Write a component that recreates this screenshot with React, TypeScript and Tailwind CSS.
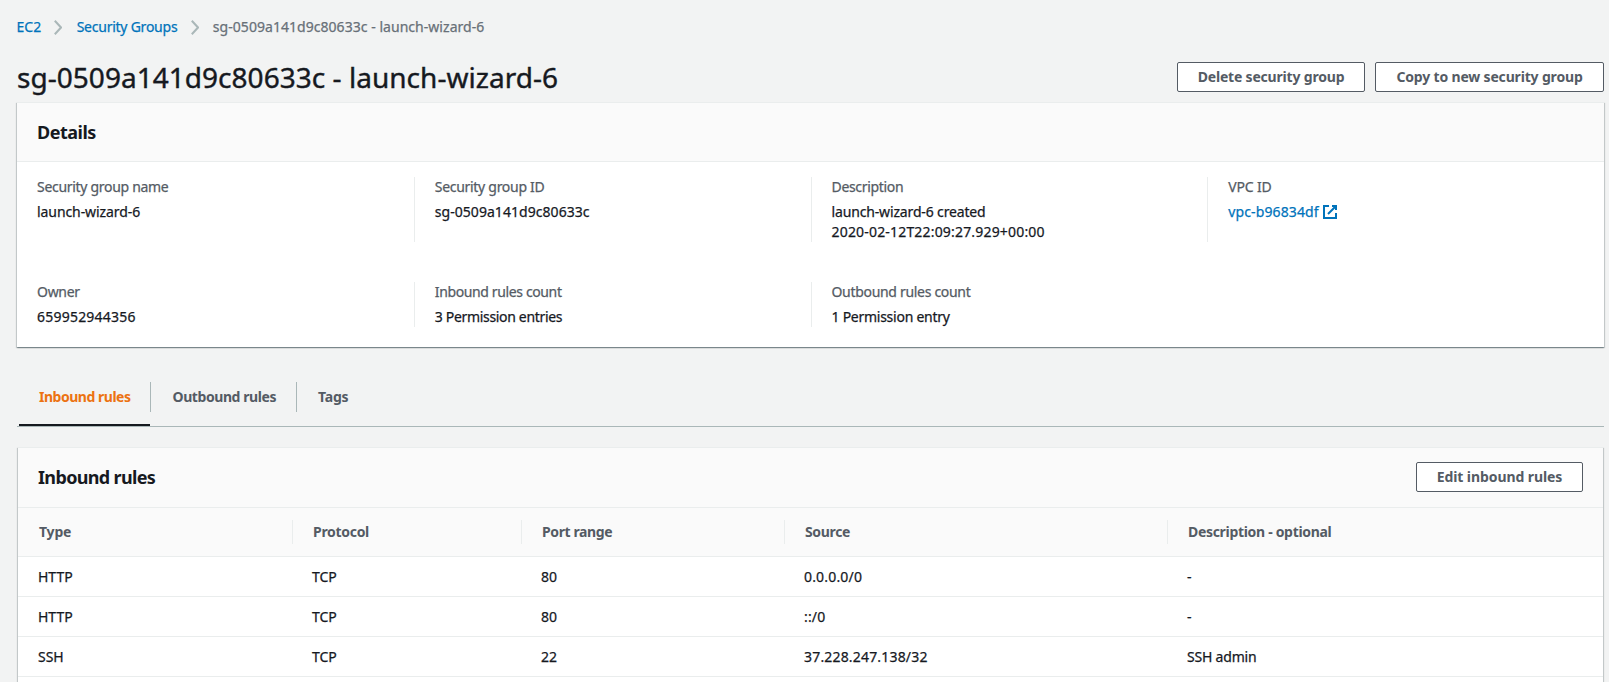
import type { ReactNode } from 'react';

const panelShadow =
  'shadow-[0_1px_1px_0_rgba(0,28,36,0.3),1px_1px_1px_0_rgba(0,28,36,0.15),-1px_1px_1px_0_rgba(0,28,36,0.15)]';

const bold = 'font-bold [-webkit-text-stroke:0]';

function Chevron() {
  return (
    <svg width="8" height="15" viewBox="0 0 8 15" fill="none" stroke="#aab7b8" strokeWidth="2">
      <path d="M0.8 0.8 L7 7.5 L0.8 14.2" />
    </svg>
  );
}

function ExternalIcon() {
  return (
    <svg width="16" height="16" viewBox="0 0 16 16" fill="none" stroke="#0073bb" strokeWidth="2">
      <path d="M10 2h4v4M6 10l8-8" />
      <path d="M14 9.048V14H2V2h5.036" />
    </svg>
  );
}

function Button({ className, children }: { className: string; children: ReactNode }) {
  return (
    <button
      className={`flex h-[30px] items-center justify-center rounded-xs border border-[#545b64] bg-white text-sm leading-5 whitespace-nowrap text-[#545b64] ${bold} ${className}`}
    >
      {children}
    </button>
  );
}

function Field({ label, labelClass, divider, children }: {
  label: string;
  labelClass: string;
  divider?: boolean;
  children: ReactNode;
}) {
  return (
    <div className={divider ? 'border-l border-[#eaeded] pl-5' : 'pl-5'}>
      <div className={`mb-[5px] text-[#545b64] ${labelClass}`}>{label}</div>
      {children}
    </div>
  );
}

const columns = [
  { label: 'Type', className: 'pl-[21px] tracking-[-0.2px]', border: true },
  { label: 'Protocol', className: 'pl-5 tracking-[-0.3px]', border: true },
  { label: 'Port range', className: 'pl-5 tracking-[-0.4px]', border: true },
  { label: 'Source', className: 'pl-5 tracking-[-0.35px]', border: true },
  { label: 'Description - optional', className: 'pl-5 tracking-[-0.31px]', border: false },
];

const cellClasses = [
  'pl-5',
  'pl-[19px]',
  'pl-[19px]',
  'pl-[19px] tracking-[0.18px]',
  'pl-[19px] tracking-[-0.2px]',
];

const rows = [
  ['HTTP', 'TCP', '80', '0.0.0.0/0', '-'],
  ['HTTP', 'TCP', '80', '::/0', '-'],
  ['SSH', 'TCP', '22', '37.228.247.138/32', 'SSH admin'],
];

const tableGrid = 'grid grid-cols-[275px_229px_263px_383px_1fr]';

export default function App() {
  return (
    <div className="h-[682px] overflow-hidden bg-[#f2f3f3] pt-[17px] font-['Noto_Sans',sans-serif] text-sm leading-5 text-[#16191f] [-webkit-text-stroke:0.25px]">
      <nav className="flex h-5 items-center pl-[16.5px]">
        <a className="mr-[13px] text-[#0073bb]">EC2</a>
        <Chevron />
        <a className="mr-[13.5px] ml-[14.5px] tracking-[-0.24px] text-[#0073bb]">Security Groups</a>
        <Chevron />
        <span className="ml-[14px] tracking-[0.04px] text-[#687078]">sg-0509a141d9c80633c - launch-wizard-6</span>
      </nav>

      <header className="mt-[22px] flex h-[43px] items-start justify-between pr-[5px] pl-[17px]">
        <h1 className="text-[28px] leading-9 tracking-[0.03px] [-webkit-text-stroke:0.4px]">
          sg-0509a141d9c80633c - launch-wizard-6
        </h1>
        <div className="mt-[3px] flex gap-2.5">
          <Button className="w-[188px] tracking-[-0.19px]">Delete security group</Button>
          <Button className="w-[229px] tracking-[-0.17px]">Copy to new security group</Button>
        </div>
      </header>

      <section className={`mr-[5px] ml-[17px] border-t border-[#eaeded] bg-white ${panelShadow}`}>
        <div className="border-b border-[#eaeded] bg-[#fafafa] px-5 py-[18px]">
          <h2 className={`text-lg leading-[22px] tracking-[-0.5px] ${bold}`}>Details</h2>
        </div>
        <div className="grid grid-cols-4 gap-y-10 pt-[15px] pb-5">
          <Field label="Security group name" labelClass="tracking-[-0.3px]">
            <span className="tracking-[-0.08px]">launch-wizard-6</span>
          </Field>
          <Field label="Security group ID" labelClass="tracking-[-0.29px]" divider>
            <span className="tracking-[0.05px]">sg-0509a141d9c80633c</span>
          </Field>
          <Field label="Description" labelClass="tracking-[-0.32px]" divider>
            <div className="tracking-[-0.15px]">launch-wizard-6 created</div>
            <div className="tracking-[0.18px]">2020-02-12T22:09:27.929+00:00</div>
          </Field>
          <Field label="VPC ID" labelClass="tracking-[-0.15px]" divider>
            <a className="flex h-5 items-center gap-[3px] tracking-[0.12px] text-[#0073bb]">
              vpc-b96834df
              <ExternalIcon />
            </a>
          </Field>
          <Field label="Owner" labelClass="tracking-[-0.3px]">
            <span className="tracking-[0.22px]">659952944356</span>
          </Field>
          <Field label="Inbound rules count" labelClass="tracking-[-0.37px]" divider>
            <span className="tracking-[-0.32px]">3 Permission entries</span>
          </Field>
          <Field label="Outbound rules count" labelClass="tracking-[-0.31px]" divider>
            <span className="tracking-[-0.26px]">1 Permission entry</span>
          </Field>
        </div>
      </section>

      <div className={`mt-[35px] mr-[5px] ml-[17px] flex h-[45px] border-b border-[#aab7b8] pl-0.5 text-[#545b64] ${bold}`}>
        <div className="h-11 w-[131px] border-b-2 border-[#16191f] pt-[5px] pl-5 tracking-[-0.48px] text-[#ec7211]">
          Inbound rules
        </div>
        <div className="h-[30px] w-[146px] border-l border-[#aab7b8] pt-[5px] pl-[21.5px] tracking-[-0.42px]">
          Outbound rules
        </div>
        <div className="h-[30px] border-l border-[#aab7b8] pt-[5px] pl-[21px] tracking-[-0.2px]">Tags</div>
      </div>

      <section className={`mt-5 mr-[6px] ml-[18px] border-t border-[#eaeded] bg-white ${panelShadow}`}>
        <div className="flex h-[60px] items-start justify-between border-b border-[#eaeded] bg-[#fafafa] px-5">
          <h2 className={`mt-[18px] text-lg leading-[22px] tracking-[-0.65px] ${bold}`}>Inbound rules</h2>
          <Button className="mt-[14px] w-[167px] tracking-[-0.08px]">Edit inbound rules</Button>
        </div>
        <div className={`${tableGrid} border-b border-[#eaeded] bg-[#fafafa] py-3 text-[#545b64] ${bold}`}>
          {columns.map((c) => (
            <div key={c.label} className={`h-6 pt-0.5 ${c.border ? 'border-r border-[#eaeded]' : ''} ${c.className}`}>
              {c.label}
            </div>
          ))}
        </div>
        {rows.map((row, r) => (
          <div key={r} className={`${tableGrid} h-10 border-b border-[#eaeded] pt-2.5`}>
            {row.map((cell, c) => (
              <div key={c} className={cellClasses[c]}>
                {cell}
              </div>
            ))}
          </div>
        ))}
        <div className="h-10" />
      </section>
    </div>
  );
}
